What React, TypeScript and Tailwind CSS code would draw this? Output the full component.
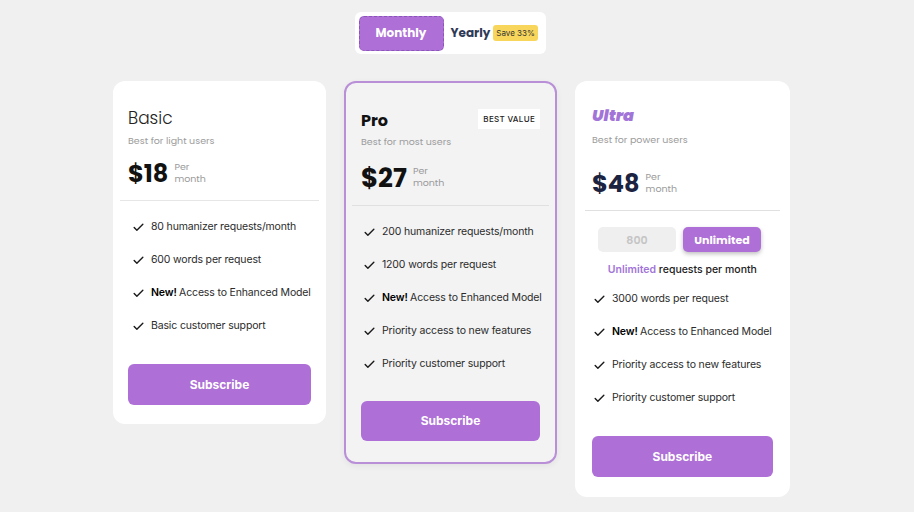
import { Check } from "lucide-react";

const heading = { fontFamily: "Poppins, Inter, 'Noto Sans', sans-serif" };

type Feature = { text: string; isNew?: boolean };

const FeatureList = ({ items, gap }: { items: Feature[]; gap: string }) => (
  <ul className={`flex flex-col ${gap}`}>
    {items.map((item) => (
      <li
        key={item.text}
        className="flex items-center gap-[6px] whitespace-nowrap text-[10.5px] leading-[14px] tracking-[-0.15px] text-[#2b2b2b]"
      >
        <Check className="h-[13px] w-[13px] shrink-0 text-[#1a1a1a]" strokeWidth={2.6} />
        <span>
          {item.isNew && <b className="font-semibold text-black">New! </b>}
          {item.text}
        </span>
      </li>
    ))}
  </ul>
);

const Price = ({ amount, className }: { amount: string; className: string }) => (
  <div className="flex items-start gap-[6px]">
    <span className={className} style={heading}>
      {amount}
    </span>
    <div className="mt-[1px] flex flex-col text-[9.5px] leading-[12px] text-[#9a9a9a]" style={heading}>
      <span>Per</span>
      <span>month</span>
    </div>
  </div>
);

const SubscribeButton = ({ className }: { className: string }) => (
  <button
    className={`w-full rounded-[6px] bg-[#ae70d6] text-[12px] font-bold text-white ${className}`}
  >
    Subscribe
  </button>
);

export default function App() {
  return (
    <div
      className="min-h-[512px] w-full bg-[#f0f0f0] pt-[12px]"
      style={{ fontFamily: "Inter, 'Liberation Sans', sans-serif" }}
    >
      <div className="w-[676px] ml-[113px]">
        {/* billing toggle */}
        <div className="flex justify-center">
          <div className="ml-[-2px] flex h-[42px] w-[191px] items-center gap-[7px] rounded-[6px] bg-white p-[4px]">
            <button
              className="h-[35px] w-[85px] rounded-[5px] border border-dashed border-[#8b55b8] bg-[#ae70d6] text-[12px] font-bold text-white"
              style={heading}
            >
              Monthly
            </button>
            <span className="text-[12px] font-bold text-[#2f3a56]" style={heading}>
              Yearly
            </span>
            <span className="ml-[-4px] whitespace-nowrap rounded-[3px] bg-[#f8d65c] px-[3px] py-[3px] text-[8px] leading-[10px] text-[#333]">
              Save 33%
            </span>
          </div>
        </div>

        <div className="mt-[27px] flex items-start gap-[18px]">
          {/* Basic */}
          <div className="flex h-[343px] w-[213px] flex-col rounded-[12px] bg-white px-[7px]">
            <div className="px-[8px] pt-[27px]">
              <h2 className="text-[17px] leading-[20px] font-light text-[#222]" style={heading}>
                Basic
              </h2>
              <p className="mt-[6px] text-[9.5px] text-[#9c9c9c]" style={heading}>
                Best for light users
              </p>
              <div className="mt-[12px]">
                <Price amount="$18" className="text-[24px] leading-[28px] font-bold text-[#111]" />
              </div>
            </div>
            <div className="mt-[12px] h-px bg-[#e6e6e6]" />
            <div className="px-[12px] pt-[19px]">
              <FeatureList
                gap="gap-[19px]"
                items={[
                  { text: "80 humanizer requests/month" },
                  { text: "600 words per request" },
                  { text: "Access to Enhanced Model", isNew: true },
                  { text: "Basic customer support" },
                ]}
              />
            </div>
            <div className="px-[8px] pt-[31px]">
              <SubscribeButton className="h-[41px]" />
            </div>
          </div>

          {/* Pro */}
          <div className="flex h-[383px] w-[213px] flex-col rounded-[12px] border-2 border-[#b98fd8] bg-[#f3f3f4] px-[6px] shadow-[0_2px_6px_rgba(0,0,0,0.06)]">
            <div className="px-[9px] pt-[26px]">
              <div className="flex items-center justify-between">
                <h2 className="text-[16px] font-bold text-[#111]" style={heading}>
                  Pro
                </h2>
                <span className="mt-[-4px] bg-white px-[5px] py-[4px] text-[8px] font-medium tracking-[0.3px] text-[#222]">
                  BEST VALUE
                </span>
              </div>
              <p className="mt-[2px] text-[9.5px] text-[#9c9c9c]" style={heading}>
                Best for most users
              </p>
              <div className="mt-[15px]">
                <Price amount="$27" className="text-[26px] leading-[28px] font-bold text-[#111]" />
              </div>
            </div>
            <div className="mt-[13px] h-px bg-[#e0e0e0]" />
            <div className="px-[11px] pt-[19px]">
              <FeatureList
                gap="gap-[19px]"
                items={[
                  { text: "200 humanizer requests/month" },
                  { text: "1200 words per request" },
                  { text: "Access to Enhanced Model", isNew: true },
                  { text: "Priority access to new features" },
                  { text: "Priority customer support" },
                ]}
              />
            </div>
            <div className="px-[9px] pt-[30px]">
              <SubscribeButton className="h-[40px]" />
            </div>
          </div>

          {/* Ultra */}
          <div className="flex h-[416px] w-[215px] flex-col rounded-[12px] bg-white px-[10px]">
            <div className="px-[7px] pt-[25px]">
              <h2
                className="text-[16px] leading-[20px] font-black italic text-[#a274d8]"
                style={heading}
              >
                Ultra
              </h2>
              <p className="mt-[7px] text-[9.5px] text-[#9c9c9c]" style={heading}>
                Best for power users
              </p>
              <div className="mt-[23px]">
                <Price amount="$48" className="text-[24px] leading-[28px] font-bold text-[#1b2340]" />
              </div>
            </div>
            <div className="mt-[12px] h-px bg-[#e0e0e0]" />
            <div className="mt-[16px] flex gap-[7px] pl-[13px]">
              <button className="h-[25px] w-[78px] rounded-[5px] bg-[#efefef] text-[11px] font-semibold text-[#c4c4c4]" style={heading}>
                800
              </button>
              <button
                className="h-[25px] w-[78px] rounded-[5px] bg-[#ae70d6] text-[11px] font-bold text-white shadow-[0_2px_4px_rgba(0,0,0,0.25)]"
                style={heading}
              >
                Unlimited
              </button>
            </div>
            <p className="mt-[10px] text-center text-[10.5px] font-medium text-[#222]">
              <span className="font-semibold text-[#a274d8]">Unlimited</span> requests per month
            </p>
            <div className="px-[8px] pt-[14px]">
              <FeatureList
                gap="gap-[19px]"
                items={[
                  { text: "3000 words per request" },
                  { text: "Access to Enhanced Model", isNew: true },
                  { text: "Priority access to new features" },
                  { text: "Priority customer support" },
                ]}
              />
            </div>
            <div className="px-[7px] pt-[31px]">
              <SubscribeButton className="h-[41px]" />
            </div>
          </div>
        </div>
      </div>
    </div>
  );
}
